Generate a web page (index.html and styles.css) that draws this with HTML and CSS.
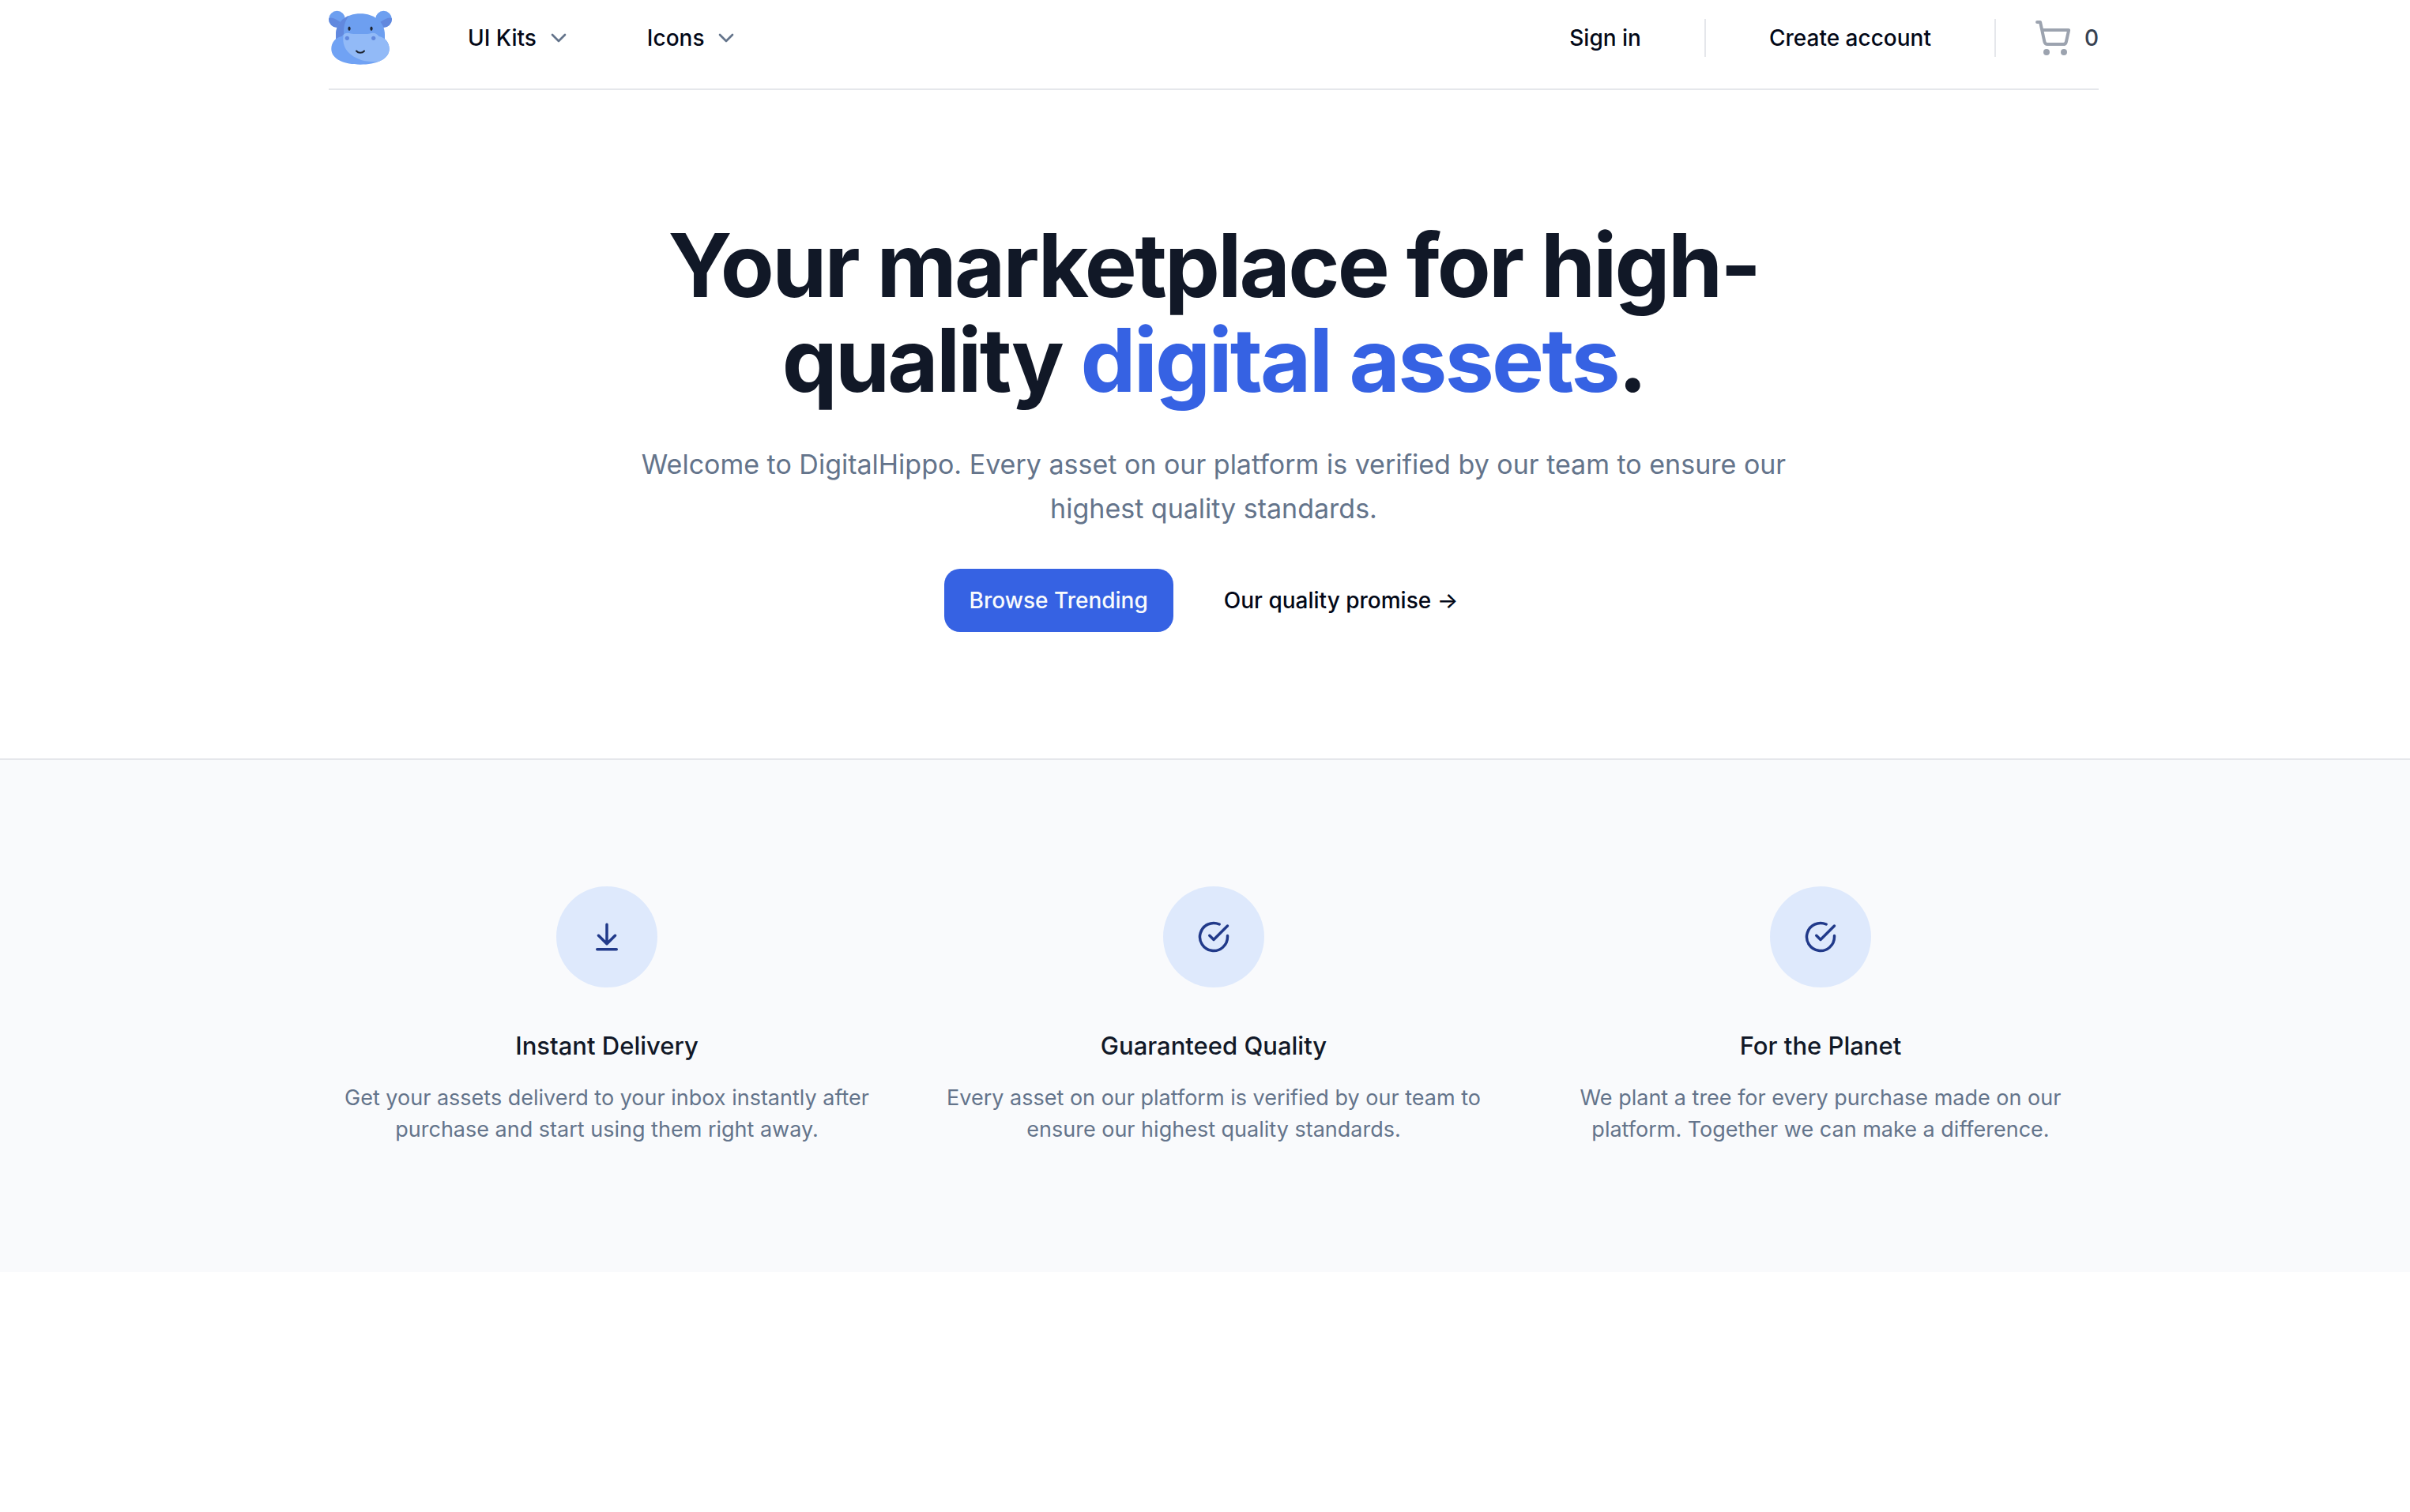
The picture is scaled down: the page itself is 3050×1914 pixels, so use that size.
FILE: index.html
```html
<!DOCTYPE html>
<html lang="en">
<head>
<meta charset="utf-8">
<meta name="viewport" content="width=device-width, initial-scale=1">
<title>DigitalHippo</title>
<link rel="stylesheet" href="styles.css">
</head>
<body>
<div class="wrapper">
  <header class="header">
    <a class="logo" href="#" aria-label="DigitalHippo home">
      <svg viewBox="0 0 80 80" aria-hidden="true">
        <defs>
          <clipPath id="ear-left"><circle cx="10.5" cy="16.3" r="10.5"/></clipPath>
          <clipPath id="ear-right"><circle cx="69.5" cy="16.3" r="10.5"/></clipPath>
          <clipPath id="head"><path d="M9 44V36C9 20 22 9.300 40 9.300S71 20 71 36v8Z"/></clipPath>
          <clipPath id="muzzle"><path d="M24 33.700c3 0 4.500 1.300 7 1.300h18c2.500 0 4-1.300 7-1.300 3.500 0 5.500 1.800 7.500 4.300C71.500 39.500 76.700 46 76.700 54 76.700 67 60 73.700 40 73.700S3.300 67 3.300 54C3.300 46 8.500 39.500 16.500 38c2-2.500 4-4.300 7.500-4.300Z"/></clipPath>
        </defs>
        <circle cx="10.500" cy="16.300" r="10.500" fill="#6d9ff0"/>
        <circle cx="69.500" cy="16.300" r="10.500" fill="#6d9ff0"/>
        <path d="M0 15c4-2 9 1 20 8v8H0Z" fill="#6188de" clip-path="url(#ear-left)"/>
        <path d="M80 15c-4-2-9 1-20 8v8h20Z" fill="#6188de" clip-path="url(#ear-right)"/>
        <g clip-path="url(#head)">
          <path d="M0 0h80v50H0Z" fill="#6d9ff0"/>
          <path d="M0 0h34C24 13 19 20 19 32v14H0Z" fill="#6188de"/>
        </g>
        <g clip-path="url(#muzzle)">
          <path d="M0 30h80v50H0Z" fill="#70a2f4"/>
          <path d="M20 30c-4 14-1 24 8 31 9 7 20 10 35 9h17V30Z" fill="#92baf7"/>
        </g>
        <ellipse cx="26" cy="28.300" rx="1.600" ry="2.800" fill="#1d2430"/>
        <ellipse cx="54" cy="28.300" rx="1.600" ry="2.800" fill="#1d2430"/>
        <circle cx="23.300" cy="40.300" r="2.600" fill="#6188de"/>
        <circle cx="56.700" cy="40.300" r="2.600" fill="#6188de"/>
        <path d="M35 56.500c2.500 3 7.500 3 10 0" fill="none" stroke="#1d2430" stroke-width="2" stroke-linecap="round"/>
      </svg>
    </a>
    <nav class="menu" aria-label="Products">
      <button class="btn btn-menu" type="button">UI Kits
        <svg class="chevron" viewBox="0 0 24 24" aria-hidden="true"><path d="m6 9 6 6 6-6"/></svg>
      </button>
      <button class="btn btn-menu" type="button">Icons
        <svg class="chevron" viewBox="0 0 24 24" aria-hidden="true"><path d="m6 9 6 6 6-6"/></svg>
      </button>
    </nav>
    <div class="account">
      <a class="btn" href="#">Sign in</a>
      <span class="divider"></span>
      <a class="btn" href="#">Create account</a>
      <span class="divider"></span>
      <a class="cart" href="#" aria-label="Cart, 0 items">
        <svg class="cart-icon" viewBox="0 0 24 24" aria-hidden="true"><circle cx="8" cy="21" r="1"/><circle cx="19" cy="21" r="1"/><path d="M2.050 2.050h2l2.660 12.420a2 2 0 0 0 2 1.580h9.780a2 2 0 0 0 1.950-1.570l1.650-7.430H5.120"/></svg>
        <span>0</span>
      </a>
    </div>
  </header>
</div>
<main>
  <div class="wrapper">
    <section class="hero">
      <h1>Your marketplace for high-quality <span class="accent">digital assets</span>.</h1>
      <p class="lead">Welcome to DigitalHippo. Every asset on our platform is verified by our team to ensure our highest quality standards.</p>
      <div class="actions">
        <a class="btn btn-primary" href="#">Browse Trending</a>
        <button class="btn" type="button">Our quality promise →</button>
      </div>
    </section>
  </div>
  <section class="perks">
    <div class="wrapper perk-grid">
      <article class="perk">
        <div class="perk-icon"><svg viewBox="0 0 24 24" aria-hidden="true"><path d="M12 17V3M6 11l6 6 6-6M19 21H5"/></svg></div>
        <h2>Instant Delivery</h2>
        <p>Get your assets deliverd to your inbox instantly after purchase and start using them right away.</p>
      </article>
      <article class="perk">
        <div class="perk-icon"><svg viewBox="0 0 24 24" aria-hidden="true"><path d="M22 11.080V12a10 10 0 1 1-5.930-9.140"/><path d="m9 11 3 3L22 4"/></svg></div>
        <h2>Guaranteed Quality</h2>
        <p>Every asset on our platform is verified by our team to ensure our highest quality standards.</p>
      </article>
      <article class="perk">
        <div class="perk-icon"><svg viewBox="0 0 24 24" aria-hidden="true"><path d="M22 11.080V12a10 10 0 1 1-5.930-9.140"/><path d="m9 11 3 3L22 4"/></svg></div>
        <h2>For the Planet</h2>
        <p>We plant a tree for every purchase made on our platform. Together we can make a difference.</p>
      </article>
    </div>
  </section>
</main>
</body>
</html>
```
FILE: styles.css
```css
*, *::before, *::after { box-sizing: border-box; }

body {
  margin: 0;
  background: #fff;
  color: #030817;
  font-family: Inter, "Liberation Sans", sans-serif;
  font-size: 28px;
  line-height: 40px;
}

h1, h2, p { margin: 0; }
a { color: inherit; text-decoration: none; }

.wrapper {
  max-width: 2582px;
  margin: 0 auto;
  padding: 0 160px 0 182px;
}

/* Header */
.header {
  display: flex;
  align-items: center;
  padding-bottom: 16px;
  border-bottom: 2px solid #e5e7eb;
}

.logo { display: flex; padding: 8px 0; }
.logo svg { width: 80px; height: 80px; }

.menu { display: flex; gap: 32px; margin-left: 64px; }

.btn {
  display: inline-flex;
  align-items: center;
  height: 80px;
  padding: 0 32px;
  border: 0;
  border-radius: 20px;
  background: none;
  color: inherit;
  font: inherit;
  font-weight: 500;
  white-space: nowrap;
}

.btn-menu { gap: 12px; }

.chevron {
  width: 32px;
  height: 32px;
  fill: none;
  stroke: #64748b;
  stroke-width: 2;
  stroke-linecap: round;
  stroke-linejoin: round;
}

.account {
  display: flex;
  align-items: center;
  gap: 48px;
  margin-left: auto;
}

.divider { width: 2px; height: 48px; background: #e5e7eb; }

.cart {
  display: flex;
  align-items: center;
  gap: 16px;
  color: #374151;
  font-weight: 500;
}

.cart-icon {
  width: 48px;
  height: 48px;
  fill: none;
  stroke: #9ca3af;
  stroke-width: 2;
  stroke-linecap: round;
  stroke-linejoin: round;
}

/* Hero */
.hero {
  display: flex;
  flex-direction: column;
  align-items: center;
  max-width: 1536px;
  margin: 0 auto;
  padding: 162px 0 160px;
  text-align: center;
}

.hero h1 {
  color: #111827;
  font-size: 111px;
  line-height: 120px;
  font-weight: 700;
  letter-spacing: -0.025em;
}

.hero .accent { color: #3662e3; }

.lead {
  margin-top: 44px;
  color: #64748b;
  font-size: 34px;
  line-height: 56px;
}

.actions { display: flex; gap: 32px; margin-top: 48px; }

.btn-primary { background: #3662e3; color: #f8fafc; }

/* Perks */
.perks {
  padding: 160px 0;
  border-top: 2px solid #e5e7eb;
  background: #f9fafc;
}

.perk-grid {
  display: grid;
  grid-template-columns: repeat(3, 1fr);
  gap: 64px;
}

.perk {
  display: flex;
  flex-direction: column;
  align-items: center;
  text-align: center;
}

.perk-icon {
  display: flex;
  align-items: center;
  justify-content: center;
  width: 128px;
  height: 128px;
  border-radius: 50%;
  background: #dee9fc;
}

.perk-icon svg {
  width: 42px;
  height: 42px;
  fill: none;
  stroke: #213a8a;
  stroke-width: 2;
  stroke-linecap: round;
  stroke-linejoin: round;
}

.perk h2 {
  margin-top: 50px;
  color: #111827;
  font-size: 31px;
  line-height: 48px;
  font-weight: 500;
}

.perk p {
  margin-top: 22px;
  color: #64748b;
  font-size: 27px;
}
```
